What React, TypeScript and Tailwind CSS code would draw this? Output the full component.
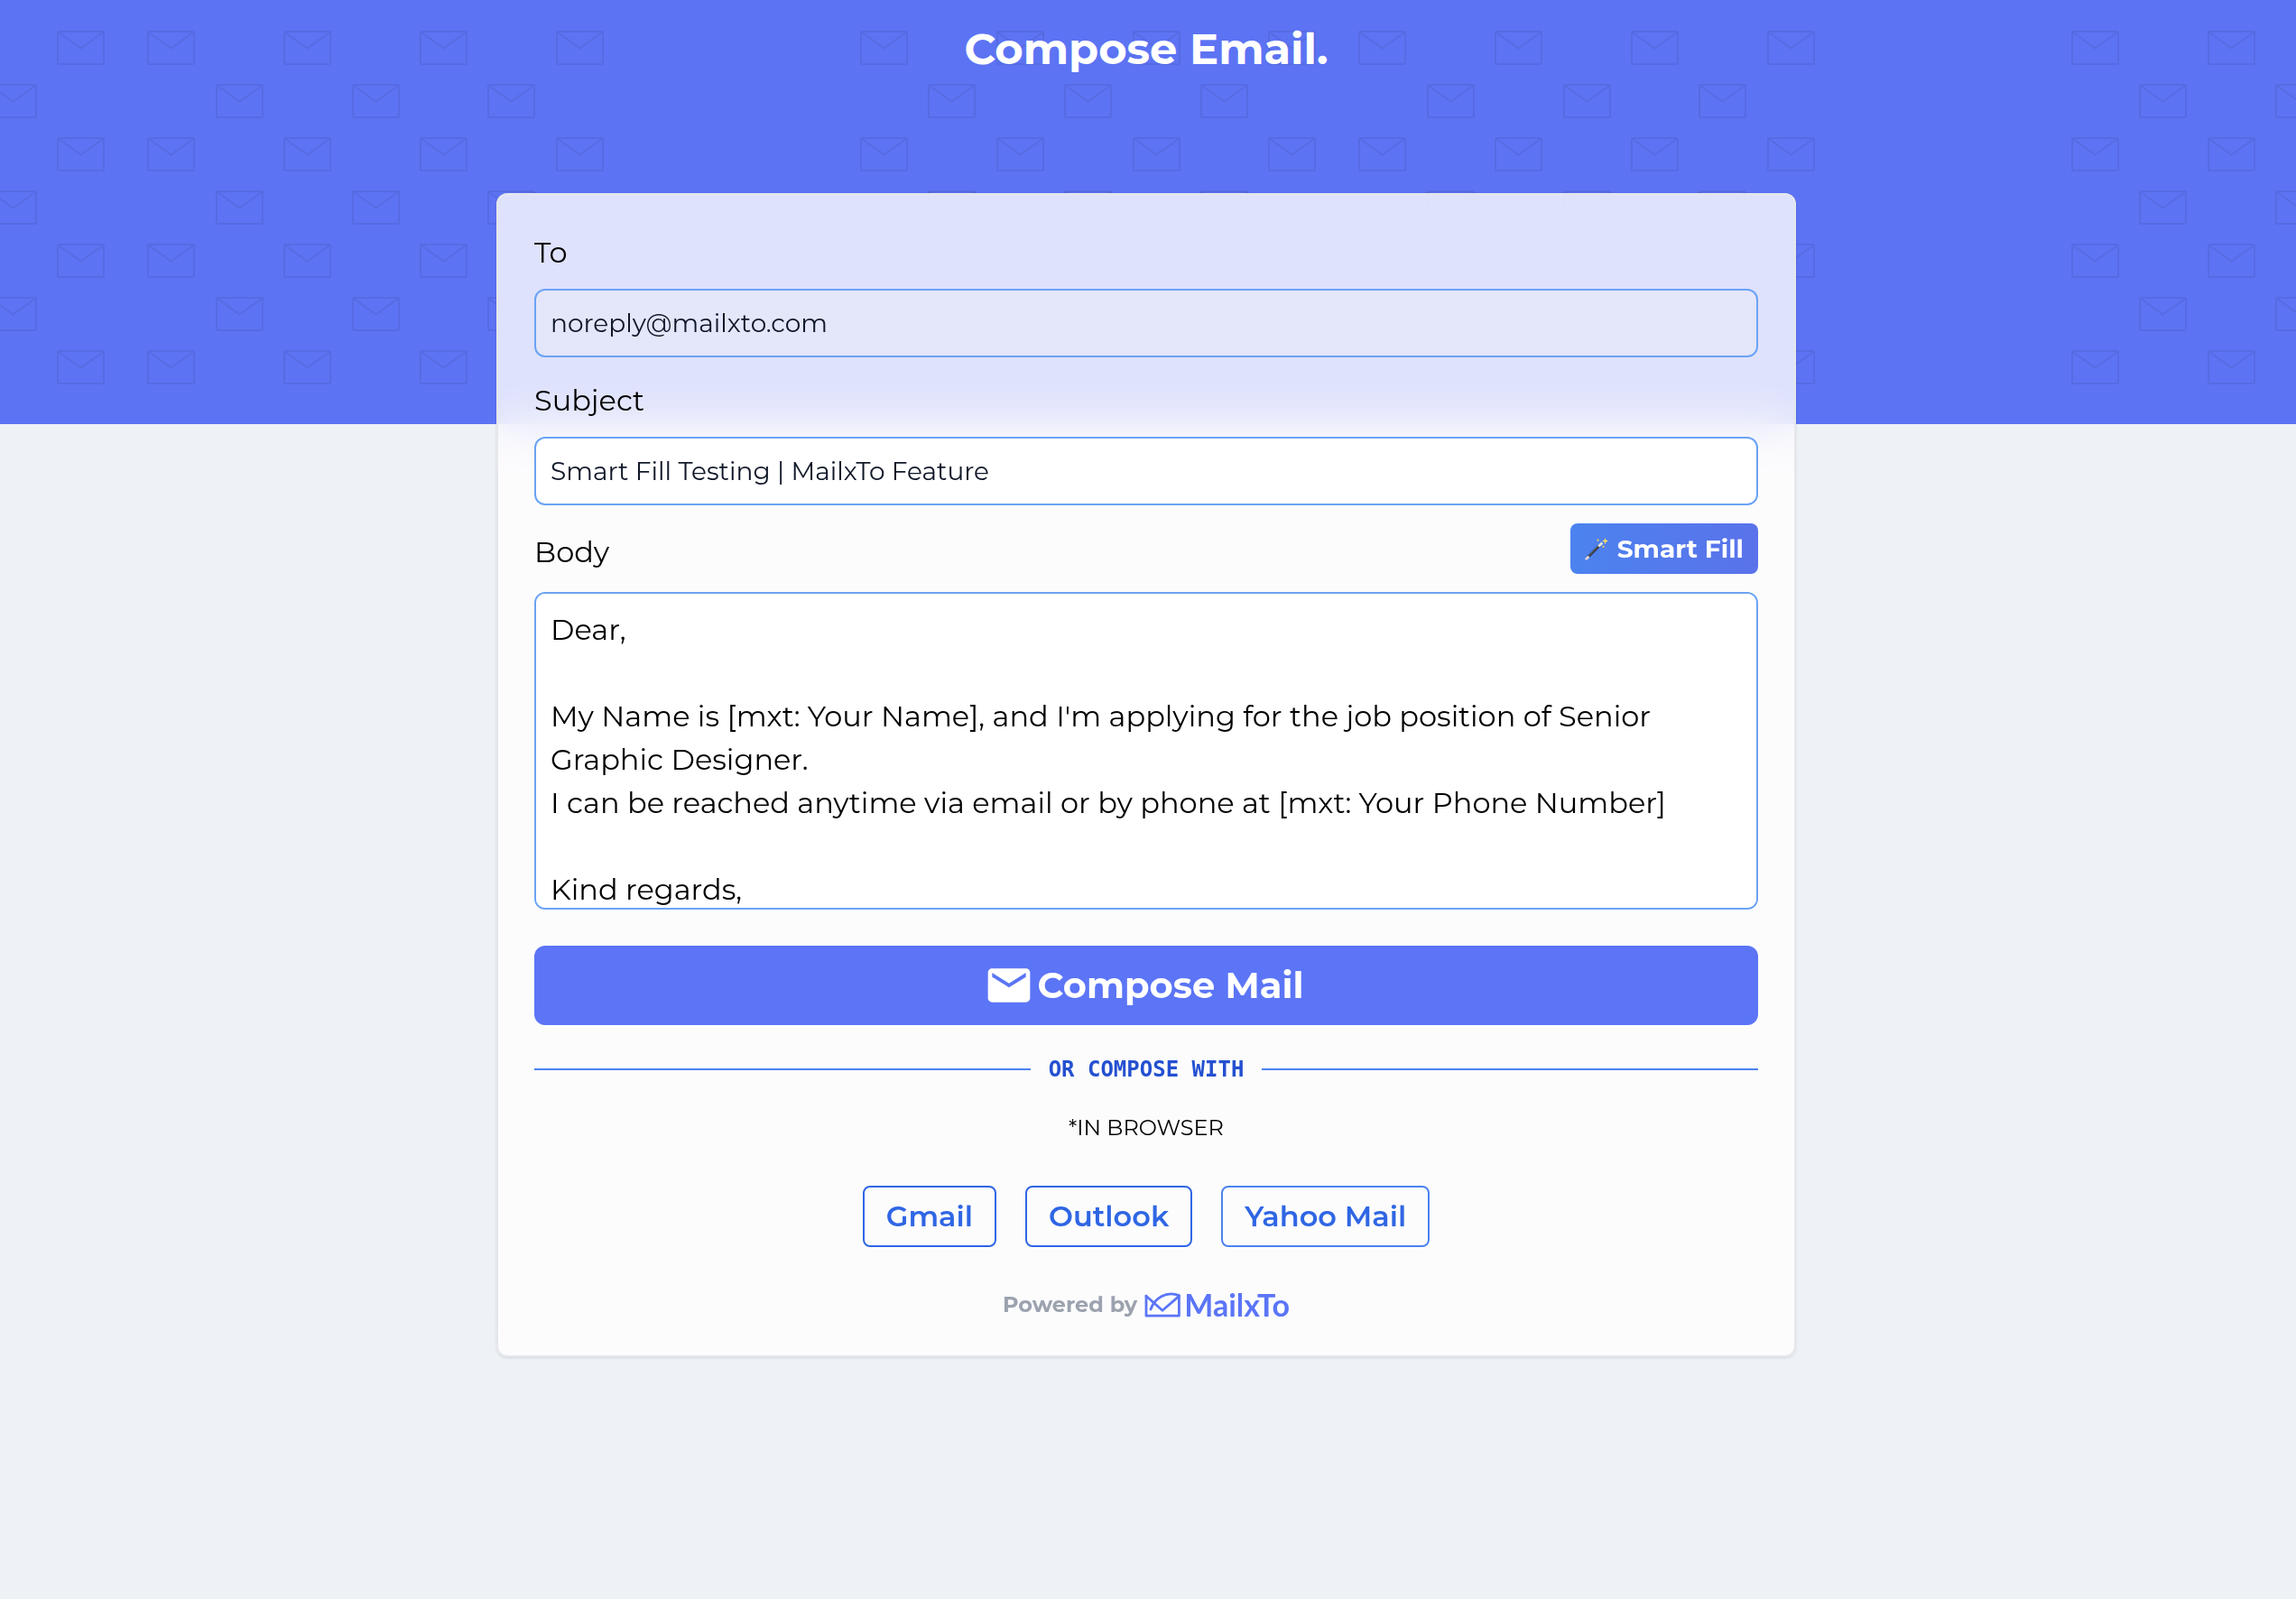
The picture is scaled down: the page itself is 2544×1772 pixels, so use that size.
import { useState } from "react";
import { MdEmail } from "react-icons/md";

const ROW_A = [63, 163, 314, 465, 616, 953, 1104, 1255];
const ROW_B = [-12, 239, 390, 540, 1028, 1179, 1330];

const BODY = `Dear,

My Name is [mxt: Your Name], and I'm applying for the job position of Senior Graphic Designer.
I can be reached anytime via email or by phone at [mxt: Your Phone Number]

Kind regards,
[mxt: Your Name]`;

function EnvelopePattern() {
  return (
    <svg className="absolute inset-x-0 top-0 h-[440px] w-full" aria-hidden="true">
      <defs>
        <g id="envelope" fill="none" stroke="#4a5bc4" strokeOpacity="0.35" strokeWidth="2">
          <rect x="1" y="1" width="51" height="36" rx="1" />
          <path d="M2 2 L26.5 19.5 L51 2" />
        </g>
        <pattern id="mail" width="1342" height="118" patternUnits="userSpaceOnUse">
          {ROW_A.map((x) => (
            <use key={`a${x}`} href="#envelope" x={x} y={34} />
          ))}
        </pattern>
        <pattern id="mail-offset" y="59" width="1342" height="118" patternUnits="userSpaceOnUse">
          {ROW_B.map((x) => (
            <use key={`b${x}`} href="#envelope" x={x} y={34} />
          ))}
        </pattern>
      </defs>
      <rect width="100%" height="440" fill="url(#mail)" />
      <rect y="60" width="100%" height="380" fill="url(#mail-offset)" />
    </svg>
  );
}

function Wand() {
  return (
    <svg className="size-7" viewBox="0 0 28 28" aria-hidden="true">
      <path d="M2.4 24.6 L17.6 9.2" stroke="#33373d" strokeWidth="2.8" strokeLinecap="round" />
      <path d="M4 22.2 L16 10" stroke="#777c84" strokeWidth="0.8" />
      <path d="M1.8 25.2 L3.6 23.4" stroke="#dcdcdc" strokeWidth="2.8" strokeLinecap="round" />
      <path d="M16 10.8 L18.6 8.2" stroke="#e6e6e0" strokeWidth="2.8" strokeLinecap="round" />
      <path d="M22.6 2 L23.5 4.6 L26.2 5.6 L23.5 6.6 L22.6 9.2 L21.7 6.6 L19 5.6 L21.7 4.6 Z" fill="#fbdf5c" />
      <path d="M14.6 2.8 l.6 1.3 1.3 .6 -1.3 .6 -.6 1.3 -.6 -1.3 -1.3 -.6 1.3 -.6Z" fill="#d9c35a" />
      <path d="M20.6 10 l.6 1.2 1.2 .6 -1.2 .6 -.6 1.2 -.6 -1.2 -1.2 -.6 1.2 -.6Z" fill="#d9c35a" />
    </svg>
  );
}

function Logo() {
  return (
    <a href="#mailxto" className="flex items-center gap-1 text-[#5b75f6]">
      <svg className="h-7 w-10" viewBox="0 0 40 28" fill="none" stroke="currentColor" strokeWidth="2.8" strokeLinecap="round" strokeLinejoin="round" aria-hidden="true">
        <path d="M2 4.2 V26.2 H38.4 V4.4" />
        <path d="M2 4.2 L20 20.2 L38.4 4.4" />
        <path d="M7 19 C11 7 24 -2 38.4 3.6" />
      </svg>
      <span className="font-['Lato',sans-serif] text-[34px] leading-9 font-bold">MailxTo</span>
    </a>
  );
}

const FIELD = "block w-full rounded-xl border-2 border-[#6ba3f5] px-4 outline-none";
const PROVIDER = "rounded-lg border-2 px-6 py-2 text-[32px] leading-[48px] font-semibold text-[#2f66e4]";

export default function App() {
  const [to, setTo] = useState("noreply@mailxto.com");
  const [subject, setSubject] = useState("Smart Fill Testing | MailxTo Feature");
  const [body, setBody] = useState(BODY);

  return (
    <div className="min-h-screen bg-[#eef2f7] font-['Montserrat',sans-serif] text-[32px] leading-[48px] text-black">
      <header className="relative h-[470px] bg-[#5c73f3]">
        <EnvelopePattern />
        <h1 className="relative pt-6 pr-1 text-center text-5xl leading-[60px] font-bold text-white">Compose Email.</h1>
      </header>

      <main className="-mt-64 pr-1">
        <form
          className="relative mx-auto max-w-[1440px] rounded-xl border-2 border-gray-200 bg-[rgba(255,254,254,0.8)] px-10 pt-10 pb-[38px] shadow-sm backdrop-blur-xl"
          onSubmit={(e) => e.preventDefault()}
        >
          <label htmlFor="to" className="block">To</label>
          <input id="to" type="email" value={to} onChange={(e) => setTo(e.target.value)} className={`${FIELD} mt-4 h-[76px] bg-[rgba(249,250,240,0.2)] text-[28px] text-gray-900`} />

          <label htmlFor="subject" className="mt-6 block">Subject</label>
          <input id="subject" value={subject} onChange={(e) => setSubject(e.target.value)} className={`${FIELD} mt-4 h-[76px] bg-white text-[28px] text-gray-900`} />

          <div className="mt-5 flex items-end justify-between">
            <label htmlFor="body">Body</label>
            <button type="button" className="flex h-14 items-center gap-2 rounded-lg bg-linear-to-r from-[#4b83ef] to-[#5a72ea] px-4 text-[28px] leading-10 font-bold text-white">
              <Wand />
              Smart Fill
            </button>
          </div>
          <textarea id="body" value={body} onChange={(e) => setBody(e.target.value)} className={`${FIELD} mt-5 h-[352px] resize-none bg-white py-4 [scrollbar-width:none]`} />

          <button type="submit" className="mt-10 flex h-[88px] w-full items-center justify-center gap-1 rounded-xl bg-[#5b75f6] pr-1.5 text-[40px] font-bold text-white">
            <MdEmail className="size-14" />
            Compose Mail
          </button>

          <div className="mt-[25px] flex items-center gap-5">
            <span className="h-0.5 flex-1 bg-[#4b83ef]" />
            <span className="font-['DejaVu_Sans_Mono',monospace] text-2xl leading-[48px] font-bold text-[#2450d0]">OR COMPOSE WITH</span>
            <span className="h-0.5 flex-1 bg-[#4b83ef]" />
          </div>
          <p className="mt-[25px] text-center text-2xl leading-8">*IN BROWSER</p>

          <div className="mt-12 flex justify-center gap-8">
            <button type="button" className={`${PROVIDER} border-[#2f66e4]`}>Gmail</button>
            <button type="button" className={`${PROVIDER} border-[#2f66e4]`}>Outlook</button>
            <button type="button" className={`${PROVIDER} border-[#4b83ef]`}>Yahoo Mail</button>
          </div>

          <div className="mt-[46px] flex items-center justify-center gap-2 text-2xl leading-9 font-bold text-[#9ca3af]">
            Powered by
            <Logo />
          </div>
        </form>
      </main>
    </div>
  );
}
